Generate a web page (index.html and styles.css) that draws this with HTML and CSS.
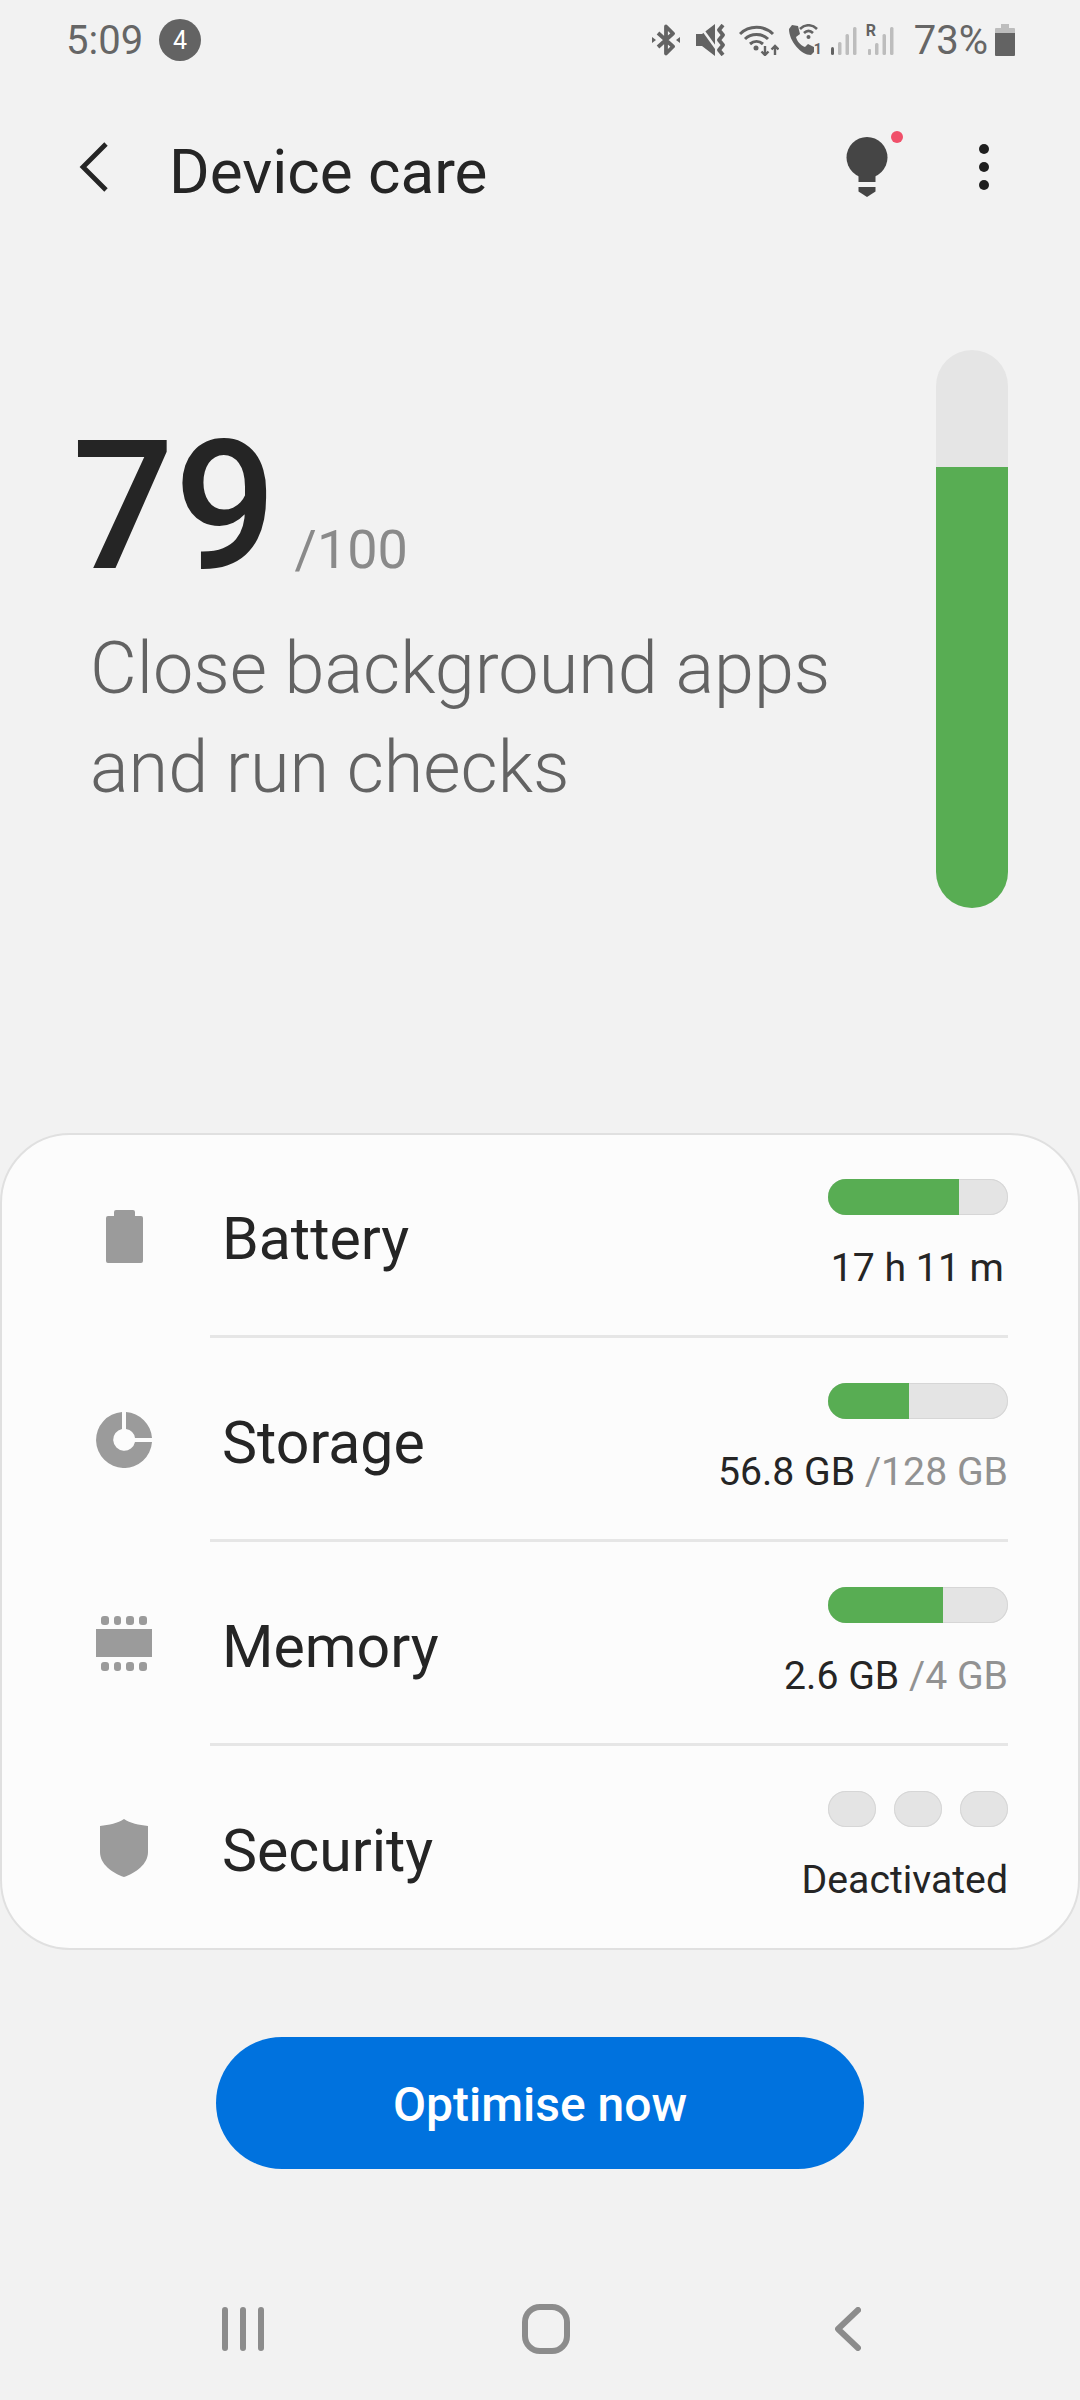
FILE: index.html
```html
<!DOCTYPE html>
<html lang="en">
<head>
    <meta charset="UTF-8">
    <meta name="viewport" content="width=device-width, initial-scale=1.0">
    <title>Device care</title>
    <link rel="stylesheet" href="styles.css">
</head>
<body>
    <div class="status-bar">
        <div class="status-left">
            <span class="clock">5:09</span>
            <span class="notif-badge">4</span>
        </div>
        <div class="status-right">
            <svg class="st-icon st-bt" viewBox="0 0 28 32"><path d="M6 9l15 13.500L14 29.500V2.500l7 7L6 23" fill="none" stroke="#636363" stroke-width="3.800" stroke-linejoin="round"/><path d="M0 13l4 3-4 3zM28 13l-4 3 4 3z" fill="#636363"/></svg>
            <svg class="st-icon st-mute" viewBox="0 0 30 32"><path d="M0 10h6L19 0v32L6 22H0z" fill="#636363"/><path d="M4 2l18 25" stroke="#f2f2f2" stroke-width="2.500"/><path d="M27 1l-4 5 4 5-4 5 4 5-4 5 4 5" fill="none" stroke="#636363" stroke-width="3.800" stroke-linejoin="round"/></svg>
            <svg class="st-icon st-wifi" viewBox="0 0 40 32"><path d="M1 10C10 1 25 1 34 10M6 15c6-6 17-6 23 0M11 20c4-3.500 9-3.500 13 0" fill="none" stroke="#636363" stroke-width="3"/><circle cx="17" cy="24" r="2.500" fill="#636363"/><path d="M26 22v9m-3.500-3.500 3.500 3.500 3.500-3.500M36 31v-9m-3.500 3.500 3.500-3.500 3.500 3.500" fill="none" stroke="#636363" stroke-width="2.400"/></svg>
            <div class="st-stack st-call">
                <svg class="st-icon" viewBox="0 0 34 32"><path d="M4 1l6 1 2 8-4 3c1 4 4 8 9 10l3-3 6 3v5l-3 3C13 31 1 17 1 5z" fill="#636363"/><path d="M12 5c5-5 12-5 17 0M16 9c3-3 6-3 9 0" fill="none" stroke="#636363" stroke-width="2.600"/><circle cx="20.500" cy="13" r="2" fill="#636363"/></svg>
                <span class="sim-no">1</span>
            </div>
            <svg class="st-icon st-sig" viewBox="0 0 26 32"><rect x="0" y="23" width="3" height="8" rx="1.500" fill="#636363"/><rect x="7" y="18" width="3.500" height="13" rx="1.500" fill="#bdbdbd"/><rect x="14.500" y="10" width="3.500" height="21" rx="1.500" fill="#bdbdbd"/><rect x="22" y="3" width="3.500" height="28" rx="1.500" fill="#bdbdbd"/></svg>
            <div class="st-stack st-sig2">
                <svg class="st-icon" viewBox="0 0 28 32"><rect x="2" y="25" width="3" height="6" rx="1" fill="#bdbdbd"/><rect x="9" y="19" width="3.500" height="12" rx="1.500" fill="#bdbdbd"/><rect x="16.500" y="10" width="3.500" height="21" rx="1.500" fill="#bdbdbd"/><rect x="24" y="3" width="3.500" height="28" rx="1.500" fill="#bdbdbd"/></svg>
                <span class="roam">R</span>
            </div>
            <span class="batt-pct">73%</span>
            <svg class="st-icon st-batt" viewBox="0 0 20 32"><path d="M6 0h8v4h5a1 1 0 0 1 1 1v4H0V5a1 1 0 0 1 1-1h5z" fill="#bdbdbd"/><path d="M0 9h20v22a1 1 0 0 1-1 1H1a1 1 0 0 1-1-1z" fill="#636363"/></svg>
        </div>
    </div>

    <header class="app-bar">
        <svg class="back-icon" viewBox="0 0 30 50"><path d="M27 2L4 25l23 23" fill="none" stroke="#252525" stroke-width="4.800"/></svg>
        <h1>Device care</h1>
        <div class="app-actions">
            <svg class="bulb-icon" viewBox="0 0 60 66"><circle cx="22" cy="26.500" r="20.500" fill="#454545"/><path d="M13.500 40h17v11h-17z" fill="#454545"/><path d="M13.500 56h17v4.500L22 66l-8.500-5.500z" fill="#454545"/><circle cx="52" cy="6" r="6" fill="#f0506a"/></svg>
            <svg class="more-icon" viewBox="0 0 12 48"><circle cx="6" cy="6" r="5" fill="#1f1f1f"/><circle cx="6" cy="24" r="5" fill="#1f1f1f"/><circle cx="6" cy="42" r="5" fill="#1f1f1f"/></svg>
        </div>
    </header>

    <section class="score">
        <div class="score-text">
            <div class="score-line"><span class="score-num">79</span><span class="score-max">/100</span></div>
            <p class="score-tip">Close background apps<br>and run checks</p>
        </div>
        <div class="gauge"><div class="gauge-fill"></div></div>
    </section>

    <section class="card">
        <div class="row">
            <div class="row-icon"><svg class="ic-battery" viewBox="0 0 37 53"><path d="M10 0h17a2 2 0 0 1 2 2v4h6a2 2 0 0 1 2 2v43a2 2 0 0 1-2 2H2a2 2 0 0 1-2-2V8a2 2 0 0 1 2-2h6V2a2 2 0 0 1 2-2z" fill="#9b9b9b"/></svg></div>
            <div class="row-label">Battery</div>
            <div class="row-value">
                <div class="bar"><div class="bar-fill" style="width: 131px"></div></div>
                <div class="value-text value-time">17 h 11 m</div>
            </div>
        </div>
        <div class="row">
            <div class="row-icon"><svg class="ic-storage" viewBox="0 0 56 56"><path d="M26 .1A28 28 0 1 0 56 30H39a11 11 0 1 1-13-13z" fill="#9b9b9b"/><path d="M30 .1A28 28 0 0 1 56 26H39a11 11 0 0 0-9-9z" fill="#9b9b9b"/></svg></div>
            <div class="row-label">Storage</div>
            <div class="row-value">
                <div class="bar"><div class="bar-fill" style="width: 81px"></div></div>
                <div class="value-text">56.8 GB <span class="value-max">/128 GB</span></div>
            </div>
        </div>
        <div class="row">
            <div class="row-icon"><svg class="ic-memory" viewBox="0 0 56 56"><rect y="13" width="56" height="28" fill="#9b9b9b"/><g fill="#9b9b9b"><rect x="5" width="8" height="9" rx="3"/><rect x="18" width="7" height="9" rx="3"/><rect x="30" width="8" height="9" rx="3"/><rect x="43" width="8" height="9" rx="3"/><rect x="5" y="46" width="8" height="9" rx="3"/><rect x="18" y="46" width="7" height="9" rx="3"/><rect x="30" y="46" width="8" height="9" rx="3"/><rect x="43" y="46" width="8" height="9" rx="3"/></g></svg></div>
            <div class="row-label">Memory</div>
            <div class="row-value">
                <div class="bar"><div class="bar-fill" style="width: 115px"></div></div>
                <div class="value-text">2.6 GB <span class="value-max">/4 GB</span></div>
            </div>
        </div>
        <div class="row">
            <div class="row-icon"><svg class="ic-shield" viewBox="0 0 48 58"><path d="M24 0c6 4 15 6 24 7v26c0 12-12 21-24 25C12 54 0 45 0 33V7C9 6 18 4 24 0z" fill="#9b9b9b"/></svg></div>
            <div class="row-label">Security</div>
            <div class="row-value">
                <div class="pills"><span class="pill"></span><span class="pill"></span><span class="pill"></span></div>
                <div class="value-text">Deactivated</div>
            </div>
        </div>
    </section>

    <div class="action">
        <button class="optimise-btn">Optimise now</button>
    </div>

    <nav class="nav-bar">
        <svg class="nav-recents" viewBox="0 0 42 44"><path d="M3 3v38M21 3v38M39 3v38" stroke="#8c8c8c" stroke-width="6" stroke-linecap="round"/></svg>
        <svg class="nav-home" viewBox="0 0 48 50"><rect x="3" y="3" width="42" height="44" rx="15" fill="none" stroke="#8c8c8c" stroke-width="6"/></svg>
        <svg class="nav-back" viewBox="0 0 26 44"><path d="M23 3L3 22l20 19" fill="none" stroke="#8c8c8c" stroke-width="6" stroke-linecap="round" stroke-linejoin="round"/></svg>
    </nav>
</body>
</html>
```

FILE: styles.css
```css
* {
    box-sizing: border-box;
    margin: 0;
    padding: 0;
}

html, body {
    width: 1080px;
    height: 2400px;
    overflow: hidden;
}

body {
    font-family: Roboto, 'Noto Sans', sans-serif;
    background: #f2f2f2;
    color: #252525;
    display: flex;
    flex-direction: column;
}

svg {
    display: block;
}

/* status bar */
.status-bar {
    height: 80px;
    padding: 0 65px 0 66px;
    display: flex;
    justify-content: space-between;
    align-items: center;
    color: #666;
    flex-shrink: 0;
}

.status-left {
    display: flex;
    align-items: center;
    gap: 16px;
}

.clock {
    font-size: 40px;
}

.notif-badge {
    width: 42px;
    height: 42px;
    border-radius: 50%;
    background: #636363;
    color: #fff;
    font-size: 25px;
    display: flex;
    align-items: center;
    justify-content: center;
}

.status-right {
    display: flex;
    align-items: center;
}

.st-icon {
    height: 32px;
}

.st-stack {
    position: relative;
    height: 32px;
}

.st-bt { width: 28px; margin-right: 16px; }
.st-mute { width: 30px; margin-right: 13px; }
.st-wifi { width: 40px; margin-right: 9px; }
.st-call { width: 34px; margin-right: 9px; }
.st-sig { width: 26px; margin-right: 9px; }
.st-sig2 { width: 28px; margin-right: 20px; }
.st-batt { width: 20px; margin-left: 7px; }

.sim-no {
    position: absolute;
    right: 0;
    bottom: 1px;
    font-size: 14px;
    line-height: 12px;
    font-weight: 700;
    color: #636363;
}

.roam {
    position: absolute;
    left: 0;
    top: 1px;
    font-size: 16px;
    line-height: 12px;
    font-weight: 700;
    color: #636363;
}

.batt-pct {
    font-size: 40px;
}

/* app bar */
.app-bar {
    height: 174px;
    flex-shrink: 0;
    display: flex;
    align-items: center;
    padding: 0 90px 0 79px;
}

.back-icon {
    width: 30px;
    height: 50px;
    margin-right: 60px;
}

.app-bar h1 {
    font-size: 62px;
    font-weight: 400;
    flex: 1;
    padding-top: 8px;
}

.app-actions {
    display: flex;
    align-items: center;
    gap: 73px;
}

.bulb-icon {
    width: 60px;
    height: 66px;
    margin-bottom: 6px;
}

.more-icon {
    width: 12px;
    height: 48px;
}

/* score */
.score {
    height: 879px;
    flex-shrink: 0;
    padding: 96px 72px 0 0;
    display: flex;
    justify-content: space-between;
    align-items: flex-start;
}

.score-text {
    padding-top: 62px;
}

.score-line {
    display: flex;
    align-items: baseline;
    padding-left: 72px;
}

.score-num {
    font-size: 180px;
    font-weight: 500;
    line-height: 190px;
}

.score-max {
    font-size: 54px;
    color: #8a8a8a;
    margin-left: 18px;
}

.score-tip {
    font-size: 72px;
    font-weight: 300;
    line-height: 99px;
    color: #636363;
    padding-left: 90px;
    margin-top: 17px;
}

.gauge {
    width: 72px;
    height: 558px;
    border-radius: 36px;
    background: #e5e5e5;
    overflow: hidden;
    display: flex;
    align-items: flex-end;
}

.gauge-fill {
    width: 100%;
    height: 441px;
    background: #58ad53;
}

/* card */
.card {
    height: 817px;
    background: #fcfcfc;
    border: 2px solid #e0e0e0;
    border-radius: 70px;
    flex-shrink: 0;
}

.row {
    height: 204px;
    display: flex;
    align-items: center;
    padding: 0 70px 0 0;
    position: relative;
}

.row:first-child {
    margin-top: -3px;
}

.row + .row::before {
    content: "";
    position: absolute;
    top: -1px;
    left: 208px;
    right: 70px;
    height: 3px;
    background: #e6e6e6;
}

.row-icon {
    width: 220px;
    display: flex;
    justify-content: center;
    padding: 4px 0 0 24px;
}

.ic-battery { width: 37px; height: 53px; }
.ic-storage { width: 56px; height: 56px; }
.ic-memory { width: 56px; height: 56px; }
.ic-shield { width: 48px; height: 58px; }

.row-label {
    font-size: 59px;
    flex: 1;
    padding-top: 8px;
}

.row-value {
    align-self: flex-start;
    padding-top: 47px;
    display: flex;
    flex-direction: column;
    align-items: flex-end;
    gap: 30px;
}

.bar {
    width: 180px;
    height: 36px;
    border-radius: 18px;
    background: #e4e4e4;
    box-shadow: inset 0 0 0 1px #d6d6d6;
    overflow: hidden;
}

.bar-fill {
    height: 100%;
    background: #58ad53;
}

.pills {
    display: flex;
    gap: 18px;
}

.pill {
    width: 48px;
    height: 36px;
    border-radius: 18px;
    background: #e4e4e4;
    box-shadow: inset 0 0 0 1px #d6d6d6;
}

.value-text {
    font-size: 39.2px;
    line-height: 46px;
}

.value-time {
    padding-right: 4px;
}

.value-max {
    color: #929292;
}

/* button */
.action {
    flex: 1;
    display: flex;
    justify-content: center;
    align-items: flex-start;
    padding-top: 87px;
}

.optimise-btn {
    width: 648px;
    height: 132px;
    border: none;
    border-radius: 66px;
    background: #0072de;
    color: #fff;
    font-family: Roboto, sans-serif;
    font-size: 48px;
    font-weight: 500;
    padding-top: 2px;
}

/* nav bar */
.nav-bar {
    height: 132px;
    flex-shrink: 0;
    display: flex;
    align-items: center;
    padding: 0 0 10px 222px;
}

.nav-recents { width: 42px; height: 44px; }
.nav-home { width: 48px; height: 50px; margin-left: 258px; }
.nav-back { width: 26px; height: 44px; margin-left: 265px; }
```
